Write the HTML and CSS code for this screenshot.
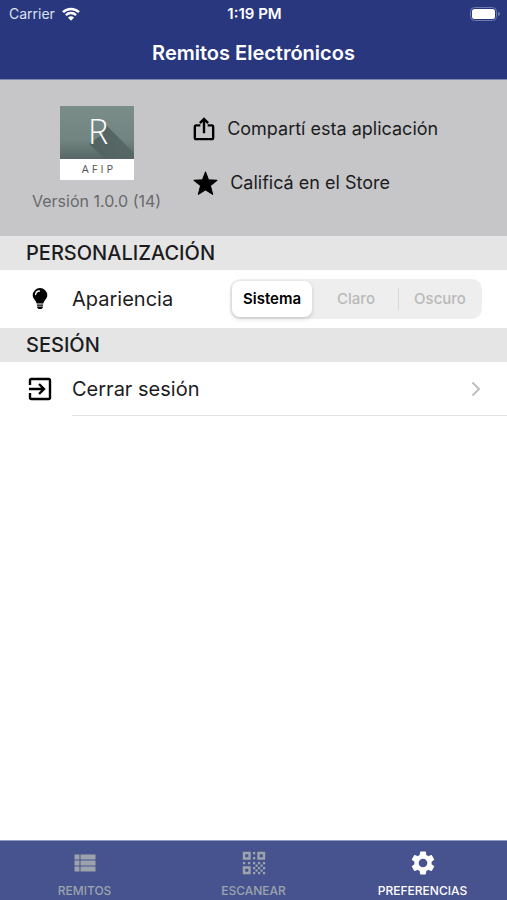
FILE: index.html
```html
<!DOCTYPE html>
<html lang="es">
<head>
<meta charset="utf-8">
<meta name="viewport" content="width=device-width, initial-scale=1">
<title>Remitos Electrónicos</title>
<link rel="stylesheet" href="styles.css">
</head>
<body>
<div class="app">
  <header class="top">
    <div class="status">
      <div class="carrier">
        <span>Carrier</span>
        <svg class="wifi" viewBox="0 0 18 14" aria-hidden="true">
          <path d="M1 5.2a11.5 11.5 0 0 1 16 0M3.9 8.1a7.4 7.4 0 0 1 10.2 0" fill="none" stroke="currentColor" stroke-width="2.5"/>
          <path d="M9 13.8 5.9 10.6a4.5 4.5 0 0 1 6.2 0z" fill="currentColor"/>
        </svg>
      </div>
      <span class="clock">1:19 PM</span>
      <svg class="battery" viewBox="0 0 30 14" aria-hidden="true">
        <rect x=".5" y=".5" width="26" height="13" rx="4" fill="none" stroke="#6f79ad"/>
        <rect x="2" y="2" width="23" height="10" rx="2.5" fill="#fff"/>
        <path d="M28 4.8q2 .6 2 2.2t-2 2.2z" fill="#6f79ad"/>
      </svg>
    </div>
    <h1 class="title">Remitos Electrónicos</h1>
  </header>

  <main class="content">
    <section class="about">
      <div class="brand">
        <svg class="logo" viewBox="0 0 74 74" role="img" aria-label="R AFIP">
          <defs>
            <linearGradient id="face" x1="0" y1="0" x2="0" y2="1">
              <stop offset="0" stop-color="#7a8d89"/>
              <stop offset=".65" stop-color="#72847f"/>
              <stop offset="1" stop-color="#566765"/>
            </linearGradient>
            <linearGradient id="shade" x1="0" y1="0" x2="1" y2="1">
              <stop offset="0" stop-color="#465756"/>
              <stop offset="1" stop-color="#566765"/>
            </linearGradient>
          </defs>
          <rect width="74" height="74" fill="#fff"/>
          <rect width="74" height="53" fill="url(#face)"/>
          <path d="M45 18 74 47v6H45L29 38l14-10z" fill="url(#shade)" opacity=".8"/>
          <text class="logo-letter" x="38" y="38">R</text>
          <text class="logo-name" x="39" y="67">AFIP</text>
        </svg>
        <span class="version">Versión 1.0.0 (14)</span>
      </div>
      <div class="actions">
        <button class="action" type="button">
          <svg class="share" viewBox="0 0 24 26" aria-hidden="true">
            <path d="M8 9H3.500Q2 9 2 10.500v12Q2 24 3.500 24h17q1.500 0 1.500-1.500v-12Q22 9 20.500 9H16M12 17.500V3M7.500 6.500 12 2l4.500 4.500" fill="none" stroke="currentColor" stroke-width="2.600"/>
          </svg>
          <span>Compartí esta aplicación</span>
        </button>
        <button class="action" type="button">
          <svg class="star" viewBox="0 0 24 24" aria-hidden="true">
            <path d="m12 1 2.900 7.500 8.100.4-6.300 5.100 2.200 8.500L12 18l-6.900 4.500L7.300 14 1 8.900l8.100-.4z" fill="currentColor" stroke="currentColor" stroke-linejoin="round"/>
          </svg>
          <span>Calificá en el Store</span>
        </button>
      </div>
    </section>

    <section>
      <h2 class="heading">PERSONALIZACIÓN</h2>
      <div class="row row-theme">
        <svg class="row-icon" viewBox="0 0 24 24" aria-hidden="true">
          <path d="M12 1a7.300 7.300 0 0 0-7.300 7.300c0 3.300 3.300 5.200 3.900 8.200h6.800c.6-3 3.900-4.900 3.900-8.200A7.300 7.300 0 0 0 12 1z" fill="currentColor"/>
          <path d="M7.600 7.500A4 4 0 0 1 11.500 4" fill="none" stroke="#fff" stroke-width="1.300" stroke-linecap="round"/>
          <path d="M8.900 17.500h6.200v1.200H8.900zM9 19.500h6v.8L13.500 22h-3L9 20.300z" fill="currentColor"/>
        </svg>
        <span class="row-label" id="theme-label">Apariencia</span>
        <div class="segments" role="radiogroup" aria-labelledby="theme-label">
          <label class="segment"><input type="radio" name="theme" checked><span>Sistema</span></label>
          <label class="segment"><input type="radio" name="theme"><span>Claro</span></label>
          <label class="segment segment-split"><input type="radio" name="theme"><span>Oscuro</span></label>
        </div>
      </div>
    </section>

    <section>
      <h2 class="heading">SESIÓN</h2>
      <button class="row" type="button">
        <svg class="row-icon" viewBox="0 0 24 24" aria-hidden="true">
          <path d="M2 8V3.500Q2 2 3.500 2h17Q22 2 22 3.500v17q0 1.500-1.500 1.500h-17Q2 22 2 20.500V16M1 12h14.500M11 7l5 5-5 5" fill="none" stroke="currentColor" stroke-width="2.400"/>
        </svg>
        <span class="row-line">
          <span>Cerrar sesión</span>
          <svg class="chevron" viewBox="0 0 10 16" aria-hidden="true">
            <path d="m1.500 1.500 6.500 6.500-6.500 6.500" fill="none" stroke="currentColor" stroke-width="2"/>
          </svg>
        </span>
      </button>
    </section>
  </main>

  <nav class="tabs">
    <a class="tab" href="#remitos">
      <svg class="tab-icon" viewBox="0 0 24 24" aria-hidden="true">
        <path d="M1.500 3.500h5v5h-5zM7.500 3.500h15v5h-15zM1.500 9.500h5v5h-5zM7.500 9.500h15v5h-15zM1.500 15.500h5v5h-5zM7.500 15.500h15v5h-15z" fill="currentColor"/>
      </svg>
      <span>REMITOS</span>
    </a>
    <a class="tab" href="#escanear">
      <svg class="tab-icon" viewBox="0 0 24 24" aria-hidden="true">
        <path d="M2 2h5.500v5.500H2zM16.500 2H22v5.500h-5.500zM2 16.500h5.500V22H2z" fill="none" stroke="currentColor" stroke-width="2.400"/>
        <path d="M11 1h2.200v2.200H11zM11 6h2.200v2.200H11zM1 11h2.200v2.200H1zM6 11h2.200v2.200H6zM11 11h2.200v2.200H11zM16 11h2.200v2.200H16zM21 11h2.200v2.200H21zM13.500 13.500h2.200v2.200h-2.200zM18.500 13.500h2.200v2.200h-2.200zM11 16h2.200v2.200H11zM16 16h2.200v2.200H16zM21 16h2.200v2.200H21zM13.500 18.500h2.200v2.200h-2.200zM18.500 18.500h2.200v2.200h-2.200zM11 21h2.200v2.200H11zM16 21h2.200v2.200H16zM21 21h2.200v2.200H21z" fill="currentColor"/>
      </svg>
      <span>ESCANEAR</span>
    </a>
    <a class="tab tab-current" href="#preferencias" aria-current="page">
      <svg class="tab-icon" viewBox="2 2 20 20" aria-hidden="true">
        <path d="M19.140 12.940c.04-.3.060-.61.060-.94 0-.32-.02-.64-.07-.94l2.030-1.580c.18-.14.230-.41.120-.61l-1.920-3.320c-.12-.22-.37-.29-.59-.22l-2.390.96c-.5-.38-1.030-.7-1.620-.94L14.400 2.810c-.04-.24-.24-.41-.48-.41h-3.840c-.24 0-.43.170-.47.410L9.250 5.350c-.59.240-1.130.570-1.620.940L5.240 5.330c-.22-.08-.47 0-.59.220L2.740 8.870c-.12.210-.08.470.120.610l2.030 1.580c-.05.300-.09.630-.09.940s.02.640.070.940l-2.030 1.580c-.18.140-.23.410-.12.610l1.920 3.320c.12.220.37.290.59.220l2.390-.96c.5.380 1.030.7 1.620.940l.36 2.540c.05.240.24.410.48.410h3.840c.24 0 .44-.17.470-.41l.36-2.540c.59-.24 1.130-.56 1.620-.94l2.390.96c.22.080.47 0 .59-.22l1.920-3.320c.12-.22.070-.47-.12-.61zM12 15.600A3.600 3.600 0 1 1 12 8.400a3.600 3.600 0 0 1 0 7.200z" fill="currentColor" fill-rule="evenodd"/>
      </svg>
      <span>PREFERENCIAS</span>
    </a>
  </nav>
</div>
</body>
</html>
```
FILE: styles.css
```css
* {
  box-sizing: border-box;
}

body {
  margin: 0;
  background: #fff;
  color: #1c1c1e;
  font-family: Inter, "Liberation Sans", sans-serif;
}

button {
  padding: 0;
  border: 0;
  background: none;
  color: inherit;
  font: inherit;
  text-align: left;
}

svg {
  display: block;
  flex: none;
}

.app {
  display: flex;
  flex-direction: column;
  min-height: 100vh;
}

.top {
  background: #28377e;
  border-bottom: 1px solid #7c85ad;
  color: #fff;
}

.status {
  display: grid;
  grid-template-columns: 1fr auto 1fr;
  align-items: center;
  height: 27px;
  padding: 0 7px 0 9px;
  font-size: 14px;
}

.carrier {
  display: flex;
  align-items: center;
  gap: 7px;
  color: #dde1f0;
}

.wifi {
  width: 18px;
  height: 14px;
  color: #fff;
}

.clock {
  font-size: 15px;
  font-weight: 600;
}

.battery {
  justify-self: end;
  width: 30px;
  height: 14px;
}

.title {
  margin: 0;
  font-size: 20px;
  font-weight: 600;
  line-height: 52px;
  text-align: center;
}

.content {
  flex: 1;
}

.about {
  display: flex;
  gap: 32px;
  padding: 26px 32px 24px;
  background: #c6c6c8;
}

.brand {
  display: flex;
  flex-direction: column;
  align-items: center;
  gap: 10px;
}

.logo {
  width: 74px;
  height: 74px;
}

.logo-letter {
  fill: #fff;
  font-family: "Open Sans", sans-serif;
  font-size: 34px;
  font-weight: 300;
  text-anchor: middle;
}

.logo-name {
  fill: #555;
  font-family: "Open Sans", sans-serif;
  font-size: 11px;
  letter-spacing: 3px;
  text-anchor: middle;
}

.version {
  color: #69696b;
  font-size: 16px;
  line-height: 22px;
}

.actions {
  display: flex;
  flex-direction: column;
  gap: 26px;
  padding-top: 9px;
}

.action {
  display: flex;
  align-items: center;
  gap: 12px;
  font-size: 18px;
  line-height: 28px;
}

.share {
  width: 22px;
  height: 26px;
  color: #000;
}

.star {
  width: 25px;
  height: 25px;
  color: #000;
}

.heading {
  margin: 0;
  padding: 0 26px;
  background: #e5e5e5;
  font-size: 20px;
  font-weight: 500;
  line-height: 34px;
}

.row {
  display: flex;
  align-items: center;
  width: 100%;
  padding-left: 28px;
  font-size: 20px;
}

.row-theme {
  height: 58px;
  padding-right: 25px;
}

.row-icon {
  width: 24px;
  height: 24px;
  margin-right: 20px;
  color: #000;
}

.segments {
  display: grid;
  grid-template-columns: repeat(3, 84px);
  height: 40px;
  margin-left: auto;
  padding: 2px 0;
  border-radius: 10px;
  background: #eee;
  color: #b9b9b9;
  font-size: 15px;
  font-weight: 500;
}

.segment {
  display: flex;
}

.segment input {
  position: absolute;
  opacity: 0;
}

.segment span {
  flex: 1;
  margin: 0 2px;
  border-radius: 8px;
  line-height: 36px;
  text-align: center;
}

.segment input:checked + span {
  background: #fff;
  box-shadow: 0 2px 4px rgba(0, 0, 0, 0.16);
  color: #000;
  font-weight: 600;
}

.segment-split {
  background: linear-gradient(#d8d8d8, #d8d8d8) 0 50% / 1px 22px no-repeat;
}

.row-line {
  display: flex;
  flex: 1;
  align-items: center;
  justify-content: space-between;
  height: 54px;
  padding-right: 26px;
  border-bottom: 1px solid #e2e2e2;
}

.chevron {
  width: 10px;
  height: 16px;
  color: #bfbfbf;
}

.tabs {
  display: grid;
  grid-template-columns: repeat(3, 1fr);
  min-height: 60px;
  border-top: 1px solid #9299bf;
  background: #47538f;
}

.tab {
  display: flex;
  flex-direction: column;
  align-items: center;
  gap: 8px;
  padding-top: 10px;
  color: #9ca3ad;
  font-size: 12px;
  font-weight: 500;
  line-height: 16px;
  text-decoration: none;
}

.tab-icon {
  width: 24px;
  height: 24px;
}

.tab-current {
  color: #fff;
}
```
